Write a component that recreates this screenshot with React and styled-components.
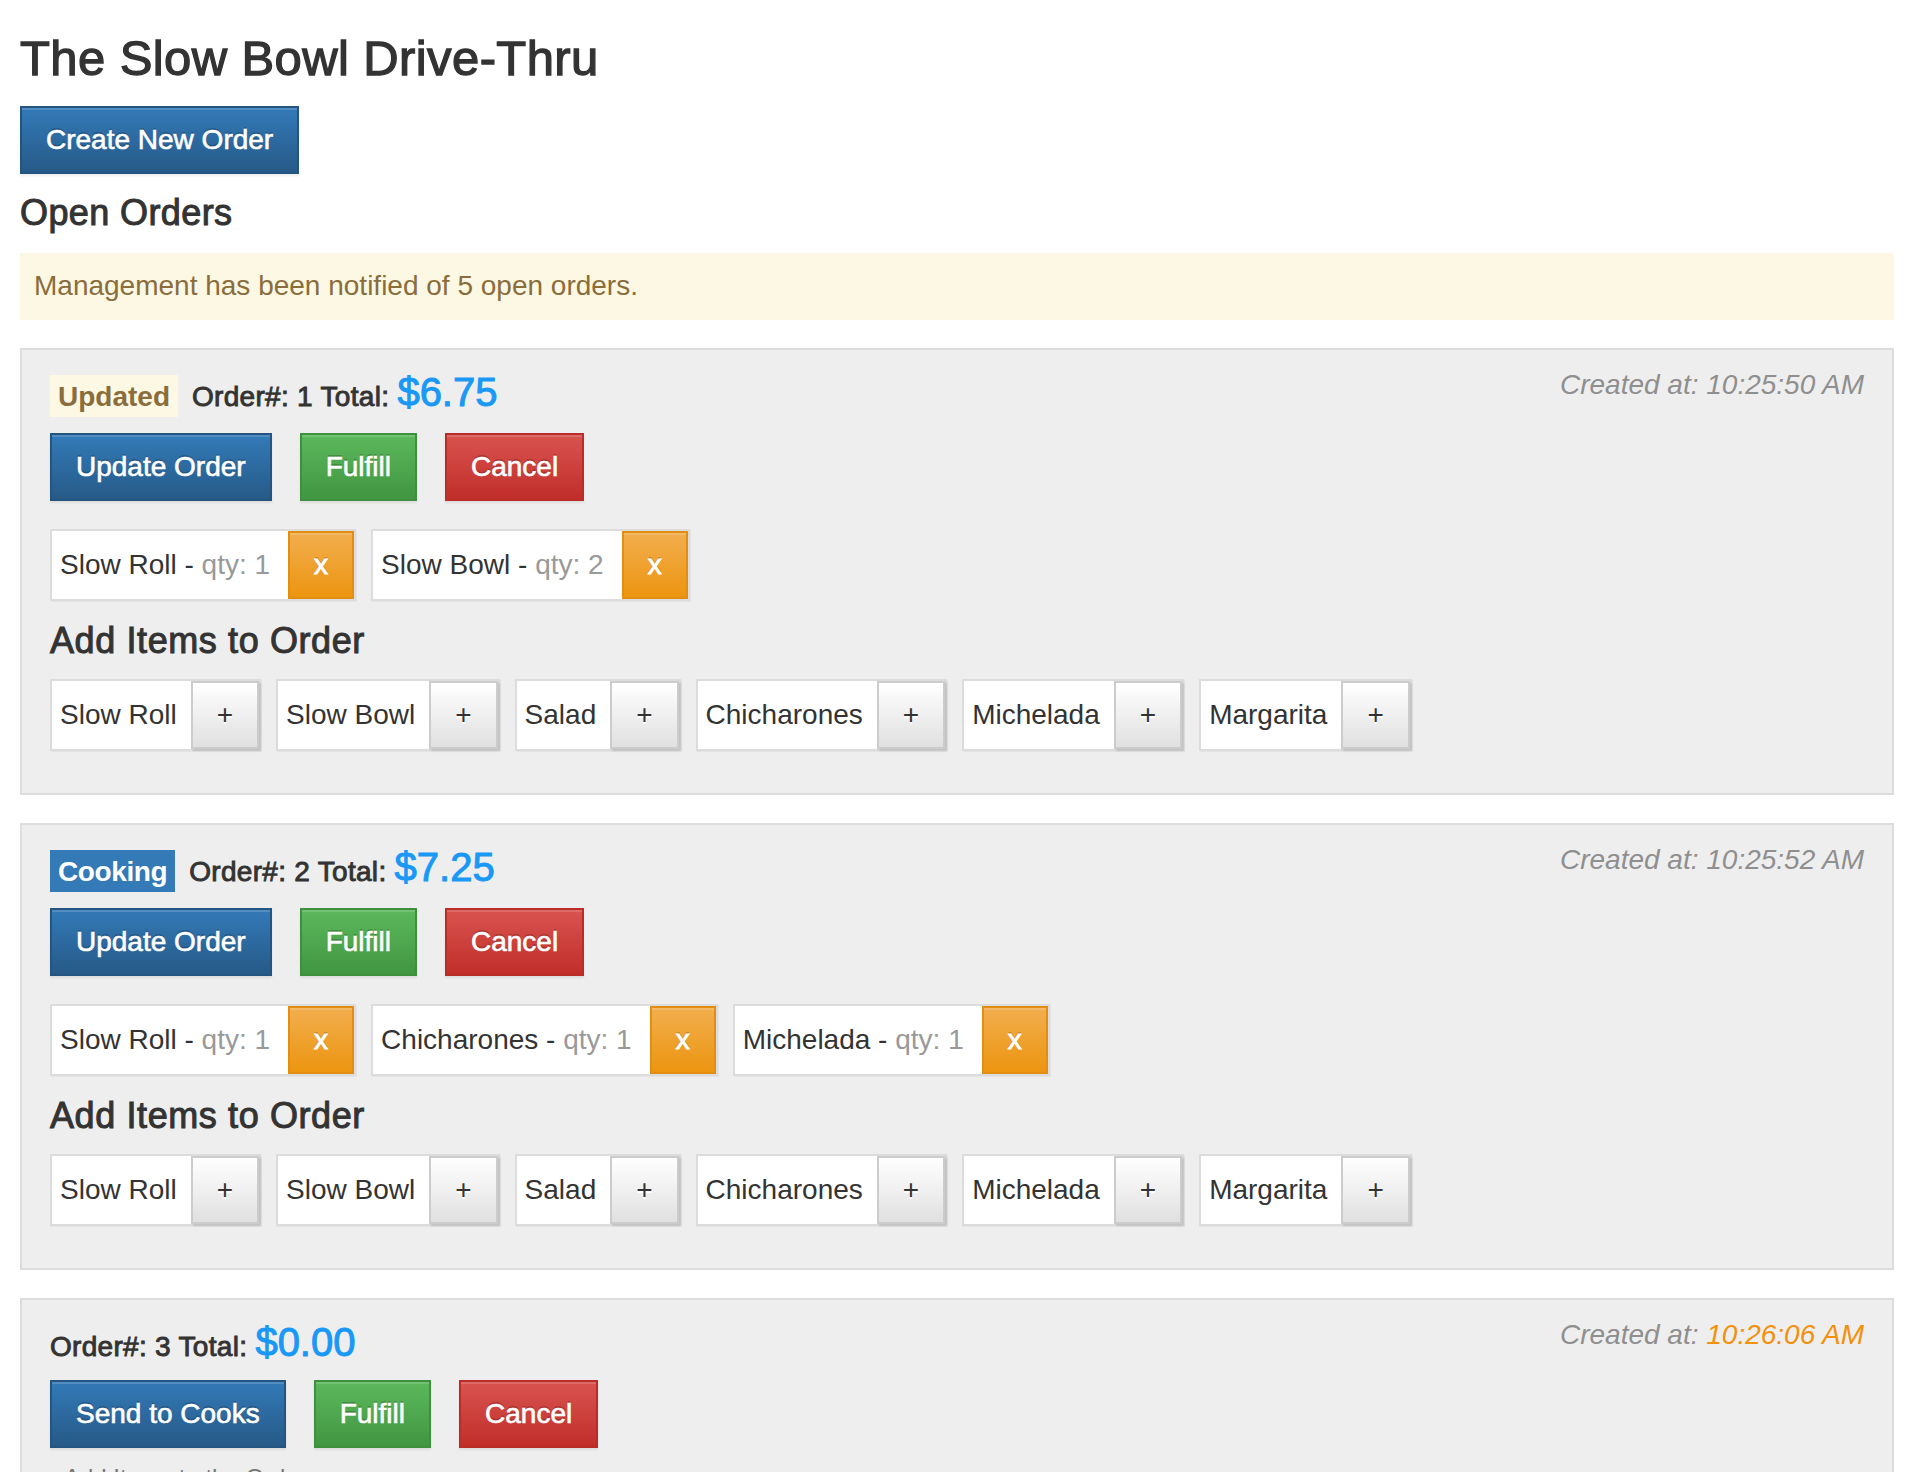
import styled, { createGlobalStyle, css } from 'styled-components';

const GlobalStyle = createGlobalStyle`
  html {
    scrollbar-width: none;
  }
  html::-webkit-scrollbar,
  body::-webkit-scrollbar {
    display: none;
  }
  * {
    box-sizing: border-box;
  }
  body {
    margin: 0;
    background: #fff;
    color: #333;
    font-family: "Liberation Sans", Arial, Helvetica, sans-serif;
    font-size: 28px;
    line-height: 40px;
  }
`;

// Helvetica Neue "medium" look: regular widths, heavier strokes
const medium = (stroke, spacing) => css`
  font-weight: 400;
  -webkit-text-stroke: ${stroke} currentColor;
  letter-spacing: ${spacing};
`;

const buttonVariants = {
  primary: { from: '#337ab7', to: '#265a88', border: '#245580', color: '#fff' },
  success: { from: '#5cb85c', to: '#419641', border: '#3e8f3e', color: '#fff' },
  danger: { from: '#d9534f', to: '#c12e2a', border: '#b92c28', color: '#fff' },
  warning: { from: '#f2ae4e', to: '#ec9510', border: '#e38d13', color: '#fff' },
  default: { from: '#ffffff', to: '#e0e0e0', border: '#cccccc', color: '#333' },
};

const statusStyles = {
  Updated: { bg: '#fcf8e3', color: '#8a6d3b' },
  Cooking: { bg: '#337ab7', color: '#fff' },
};

const Page = styled.div`
  padding: 0 22px 40px 20px;
`;

const Title = styled.h1`
  ${medium('1.3px', '0.4px')};
  font-size: 49px;
  line-height: 1.1;
  margin: 32px 0 20px;
  color: #333;
`;

const Button = styled.button`
  display: inline-block;
  margin: 0;
  padding: 12px 24px;
  font-family: inherit;
  font-size: 28px;
  line-height: 40px;
  white-space: nowrap;
  cursor: pointer;
  border-radius: 0;
  border: 2px solid ${({ $variant }) => buttonVariants[$variant].border};
  color: ${({ $variant }) => buttonVariants[$variant].color};
  background-image: ${({ $variant }) =>
    `linear-gradient(to bottom, ${buttonVariants[$variant].from} 0%, ${buttonVariants[$variant].to} 100%)`};
  text-shadow: ${({ $variant }) =>
    $variant === 'default' ? '0 2px 0 #fff' : '0 -2px 0 rgba(0, 0, 0, 0.2)'};
  box-shadow: inset 0 2px 0 rgba(255, 255, 255, 0.15), 0 2px 2px rgba(0, 0, 0, 0.075);
  -webkit-text-stroke: ${({ $variant }) => ($variant === 'default' ? '0' : '0.6px')} currentColor;
`;

const SectionTitle = styled.h2`
  ${medium('1px', '0.4px')};
  font-size: 36px;
  line-height: 1.1;
  margin: 19px 0 21px;
  color: #333;
`;

const Alert = styled.div`
  background: #fcf8e3;
  color: #8a6d3b;
  padding: 13px 14px 14px;
  margin-bottom: 28px;
`;

const OrderPanel = styled.section`
  background: #eee;
  border: 2px solid #ddd;
  padding: 20px 28px 42px;
  margin-bottom: 28px;
`;

const OrderHeader = styled.div`
  display: flex;
  justify-content: space-between;
  align-items: flex-start;
  margin-bottom: 16px;
`;

const HeaderLeft = styled.div`
  display: flex;
  align-items: baseline;
  gap: 14px;
`;

const StatusLabel = styled.span`
  font-weight: 700;
  font-size: 28px;
  line-height: 28px;
  padding: 8px 8px 6px;
  letter-spacing: ${({ $status }) => ($status === 'Cooking' ? '-0.4px' : '0')};
  background: ${({ $status }) => statusStyles[$status].bg};
  color: ${({ $status }) => statusStyles[$status].color};
`;

const OrderInfo = styled.div`
  ${medium('0.9px', '0.3px')};
  font-size: 28px;
  line-height: 1.1;
  color: #333;
`;

const Amount = styled.span`
  font-size: 40px;
  letter-spacing: 0;
  -webkit-text-stroke: 1px currentColor;
  color: #1a98f6;
`;

const CreatedAt = styled.div`
  font-style: italic;
  color: #8f8f8f;
  line-height: 40px;
  margin-top: -5px;
`;

const CreatedTime = styled.span`
  color: ${({ $late }) => ($late ? '#f3900c' : 'inherit')};
`;

const ButtonRow = styled.div`
  display: flex;
  gap: 28px;
`;

const ChipList = styled.div`
  display: flex;
  flex-wrap: wrap;
  gap: 15px;
  margin-top: ${({ $top }) => $top || 0}px;
`;

const Chip = styled.div`
  display: inline-flex;
  align-items: stretch;
  background: #fff;
  border: 2px solid #dcdcdc;
  box-shadow: 1px 1px 0 #e4e4e4;
`;

const ChipLabel = styled.span`
  display: flex;
  align-items: center;
  padding: 0 ${({ $right }) => $right}px 0 8px;
  line-height: 40px;
  white-space: nowrap;
  color: #333;
`;

const Qty = styled.span`
  color: #999;
`;

const ChipButton = styled(Button)`
  -webkit-text-stroke: ${({ $variant }) => ($variant === 'warning' ? '0.9px' : '0')} currentColor;
  box-shadow: ${({ $variant }) =>
    $variant === 'default'
      ? 'inset 0 2px 0 rgba(255,255,255,.15), 2px 2px 2px rgba(0,0,0,.12)'
      : 'inset 0 2px 0 rgba(255,255,255,.15)'};
`;

const SubTitle = styled.h3`
  ${medium('1px', '0.6px')};
  font-size: 36px;
  line-height: 1.1;
  margin: 20px 0 18px;
  color: #333;
`;

const HelpText = styled.p`
  margin: 13px 0 0;
  padding-left: 14px;
  font-size: 24px;
  line-height: 1.43;
  color: #777;
`;

const MENU = ['Slow Roll', 'Slow Bowl', 'Salad', 'Chicharones', 'Michelada', 'Margarita'];

const ORDERS = [
  {
    id: 1,
    status: 'Updated',
    total: 6.75,
    createdAt: '10:25:50 AM',
    items: [
      { name: 'Slow Roll', qty: 1 },
      { name: 'Slow Bowl', qty: 2 },
    ],
  },
  {
    id: 2,
    status: 'Cooking',
    total: 7.25,
    createdAt: '10:25:52 AM',
    items: [
      { name: 'Slow Roll', qty: 1 },
      { name: 'Chicharones', qty: 1 },
      { name: 'Michelada', qty: 1 },
    ],
  },
  { id: 3, status: null, total: 0, createdAt: '10:26:06 AM', late: true, items: [] },
  { id: 4, status: null, total: 0, createdAt: '10:26:11 AM', late: true, items: [] },
  { id: 5, status: null, total: 0, createdAt: '10:26:15 AM', late: true, items: [] },
];

function Order({ order }) {
  const isNew = order.status === null;

  return (
    <OrderPanel>
      <OrderHeader>
        <HeaderLeft>
          {order.status && <StatusLabel $status={order.status}>{order.status}</StatusLabel>}
          <OrderInfo>
            Order#: {order.id} Total: <Amount>${order.total.toFixed(2)}</Amount>
          </OrderInfo>
        </HeaderLeft>
        <CreatedAt>
          Created at: <CreatedTime $late={order.late}>{order.createdAt}</CreatedTime>
        </CreatedAt>
      </OrderHeader>

      <ButtonRow>
        <Button $variant="primary">{isNew ? 'Send to Cooks' : 'Update Order'}</Button>
        <Button $variant="success">Fulfill</Button>
        <Button $variant="danger">Cancel</Button>
      </ButtonRow>

      {order.items.length > 0 ? (
        <ChipList $top={28}>
          {order.items.map((item) => (
            <Chip key={item.name}>
              <ChipLabel $right={18}>
                {item.name}&nbsp;-&nbsp;<Qty>qty: {item.qty}</Qty>
              </ChipLabel>
              <ChipButton $variant="warning">x</ChipButton>
            </Chip>
          ))}
        </ChipList>
      ) : (
        <HelpText>Add Items to the Order</HelpText>
      )}

      <SubTitle>Add Items to Order</SubTitle>
      <ChipList>
        {MENU.map((name) => (
          <Chip key={name}>
            <ChipLabel $right={14}>{name}</ChipLabel>
            <ChipButton $variant="default">+</ChipButton>
          </Chip>
        ))}
      </ChipList>
    </OrderPanel>
  );
}

export default function App() {
  return (
    <>
      <GlobalStyle />
      <Page>
        <Title>The Slow Bowl Drive-Thru</Title>
        <Button $variant="primary">Create New Order</Button>
        <SectionTitle>Open Orders</SectionTitle>
        <Alert>Management has been notified of {ORDERS.length} open orders.</Alert>
        {ORDERS.map((order) => (
          <Order key={order.id} order={order} />
        ))}
      </Page>
    </>
  );
}
